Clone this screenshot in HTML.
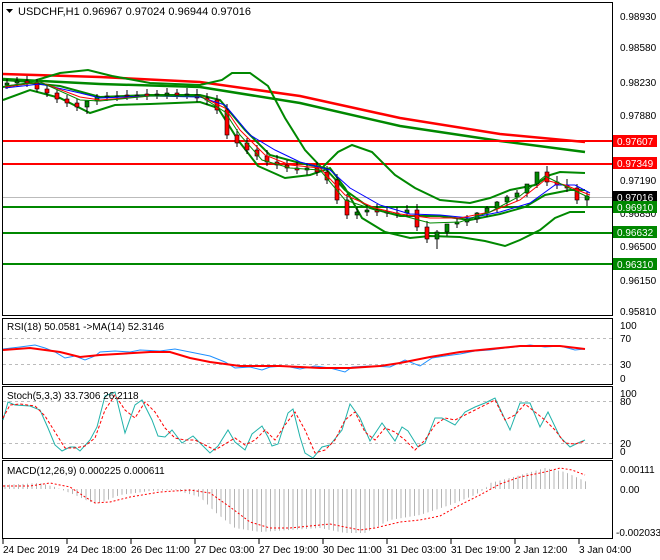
<!DOCTYPE html>
<html><head><meta charset="utf-8"><style>
html,body{margin:0;padding:0;background:#fff;width:660px;height:560px;overflow:hidden}
svg{display:block;font-family:"Liberation Sans",sans-serif}
</style></head><body>
<svg width="660" height="560" viewBox="0 0 660 560" xmlns="http://www.w3.org/2000/svg">
<defs>
<pattern id="vl" width="4.5" height="10" patternUnits="userSpaceOnUse"><rect x="0" y="0" width="1" height="10" fill="#b4b4b4"/></pattern>
</defs>
<rect width="660" height="560" fill="#fff"/>
<g fill="none" stroke="#000" stroke-width="1">
<rect x="2.5" y="2.5" width="610" height="313"/>
<rect x="2.5" y="318.5" width="610" height="66"/>
<rect x="2.5" y="386.5" width="610" height="72"/>
<rect x="2.5" y="460.5" width="610" height="78"/>
</g>
<g stroke="#bbb" stroke-dasharray="3,3">
<line x1="3" y1="338.5" x2="612" y2="338.5"/><line x1="3" y1="364.5" x2="612" y2="364.5"/>
<line x1="3" y1="401.5" x2="612" y2="401.5"/><line x1="3" y1="443.5" x2="612" y2="443.5"/>
</g>
<polyline fill="none" stroke="#f00" stroke-width="2.5" points="3,74 100,77 200,82 300,96 400,118 500,134 585,142"/>
<polyline fill="none" stroke="#080" stroke-width="2.5" points="3,79 100,84 200,87 300,103 400,126 500,141 585,152"/>
<line x1="3" y1="197.5" x2="612" y2="197.5" stroke="#bbb"/>
<g stroke-width="2">
<line x1="3" y1="141" x2="612" y2="141" stroke="#f00"/>
<line x1="3" y1="164" x2="612" y2="164" stroke="#f00"/>
<line x1="3" y1="207" x2="612" y2="207" stroke="#080"/>
<line x1="3" y1="233" x2="612" y2="233" stroke="#080"/>
<line x1="3" y1="264" x2="612" y2="264" stroke="#080"/>
</g>
<g fill="none" stroke="#080" stroke-width="2">
<polyline points="3,80 30,82 60,73 88,70 112,76 150,83 200,85 222,80 232,73 250,73 268,86 285,118 305,150 322,168 338,152 352,145 372,152 395,175 415,188 440,200 470,203 490,198 510,190 535,185 550,175 560,172 585,173"/>
<polyline points="3,100 30,90 60,98 90,113 115,105 150,104 200,102 218,108 238,140 258,166 285,178 310,175 330,168 345,188 362,218 385,232 410,238 430,236 460,237 485,241 505,246 520,240 540,230 555,218 570,212 585,212"/>
<polyline points="3,87 30,83 60,86 100,97 150,95 200,95 220,100 245,130 270,155 300,163 325,168 345,190 370,208 400,216 440,216 470,220 500,214 525,207 545,195 570,190 585,190"/>
</g>
<!-- candles wicks -->
<path stroke="#000" fill="none" d="M7 79V89M17 77V87M27 76V87M37 79V92M47 85V97M57 89V103M67 95V107M77 99V111M87 101V114M97 94V105M107 92V101M117 91V101M127 90V100M137 91V100M147 89V100M157 90V99M167 88V99M177 89V99M187 88V99M197 89V102M207 93V105M217 95V114M227 104V139M237 129V147M247 138V154M257 145V160M267 150V166M277 155V169M287 160V172M297 162V174M307 163V175M317 162V176M327 166V184M337 174V204M347 194V219M357 207V219M367 205V216M377 204V216M387 206V217M397 207V218M407 205V217M417 204V231M427 221V243M437 230V249M447 225V236M457 218V228M467 215V226M477 212V223M487 206V217M497 201V212M507 195V206M517 190V201M527 184V197M537 176V188M547 166V186M557 176V189M567 179V192M577 184V204M587 192V206"/>
<g stroke="#000" stroke-width="0.6">
<rect x="5" y="83" width="4" height="2" fill="#080"/><rect x="15" y="81" width="4" height="2" fill="#080"/><rect x="25" y="81" width="4" height="2" fill="#f00"/><rect x="35" y="83" width="4" height="6" fill="#f00"/><rect x="45" y="89" width="4" height="4" fill="#f00"/><rect x="55" y="93" width="4" height="6" fill="#f00"/><rect x="65" y="99" width="4" height="4" fill="#f00"/><rect x="75" y="103" width="4" height="4" fill="#f00"/><rect x="85" y="101" width="4" height="6" fill="#080"/><rect x="95" y="97" width="4" height="4" fill="#080"/><rect x="105" y="96" width="4" height="1" fill="#080"/><rect x="115" y="96" width="4" height="1" fill="#080"/><rect x="125" y="95" width="4" height="1" fill="#f00"/><rect x="135" y="95" width="4" height="1" fill="#080"/><rect x="145" y="94" width="4" height="2" fill="#f00"/><rect x="155" y="94" width="4" height="1" fill="#080"/><rect x="165" y="93" width="4" height="2" fill="#080"/><rect x="175" y="93" width="4" height="2" fill="#f00"/><rect x="185" y="94" width="4" height="1" fill="#080"/><rect x="195" y="95" width="4" height="3" fill="#f00"/><rect x="205" y="98" width="4" height="2" fill="#f00"/><rect x="215" y="100" width="4" height="10" fill="#f00"/><rect x="225" y="110" width="4" height="25" fill="#f00"/><rect x="235" y="135" width="4" height="8" fill="#f00"/><rect x="245" y="143" width="4" height="7" fill="#f00"/><rect x="255" y="150" width="4" height="6" fill="#f00"/><rect x="265" y="156" width="4" height="6" fill="#f00"/><rect x="275" y="162" width="4" height="3" fill="#f00"/><rect x="285" y="165" width="4" height="3" fill="#f00"/><rect x="295" y="168" width="4" height="2" fill="#f00"/><rect x="305" y="168" width="4" height="2" fill="#080"/><rect x="315" y="168" width="4" height="4" fill="#f00"/><rect x="325" y="172" width="4" height="8" fill="#f00"/><rect x="335" y="180" width="4" height="20" fill="#f00"/><rect x="345" y="200" width="4" height="15" fill="#f00"/><rect x="355" y="212" width="4" height="3" fill="#080"/><rect x="365" y="210" width="4" height="2" fill="#080"/><rect x="375" y="210" width="4" height="2" fill="#f00"/><rect x="385" y="212" width="4" height="1" fill="#f00"/><rect x="395" y="213" width="4" height="1" fill="#f00"/><rect x="405" y="210" width="4" height="3" fill="#080"/><rect x="415" y="210" width="4" height="17" fill="#f00"/><rect x="425" y="227" width="4" height="12" fill="#f00"/><rect x="435" y="232" width="4" height="7" fill="#080"/><rect x="445" y="224" width="4" height="8" fill="#080"/><rect x="455" y="222" width="4" height="2" fill="#080"/><rect x="465" y="219" width="4" height="3" fill="#080"/><rect x="475" y="213" width="4" height="6" fill="#080"/><rect x="485" y="208" width="4" height="5" fill="#080"/><rect x="495" y="202" width="4" height="6" fill="#080"/><rect x="505" y="197" width="4" height="5" fill="#080"/><rect x="515" y="193" width="4" height="4" fill="#080"/><rect x="525" y="184" width="4" height="9" fill="#080"/><rect x="535" y="172" width="4" height="12" fill="#080"/><rect x="545" y="172" width="4" height="10" fill="#f00"/><rect x="555" y="182" width="4" height="3" fill="#f00"/><rect x="565" y="185" width="4" height="3" fill="#f00"/><rect x="575" y="188" width="4" height="12" fill="#f00"/><rect x="585" y="196" width="4" height="4" fill="#080"/>
</g>
<polyline fill="none" stroke="#00f" stroke-width="1" points="5,88 40,84 80,93 100,98 150,96 200,97 225,105 250,135 275,150 300,162 330,170 350,188 380,205 410,214 440,215 470,218 500,212 530,203 555,185 575,185 590,193"/>
<polyline fill="none" stroke="#f00" stroke-width="1" points="5,87 40,82 80,97 100,100 150,96 200,96 225,108 240,130 265,155 290,165 320,168 345,195 375,208 400,214 430,218 460,218 490,212 520,200 545,180 565,185 590,195"/>
<polyline fill="none" stroke="#080" stroke-width="1" points="5,86 40,82 80,100 100,101 150,96 200,96 225,112 240,135 262,160 290,168 320,170 345,200 375,210 400,215 430,223 460,222 490,212 520,196 545,176 565,186 590,198"/>
<path d="M6,9 L13,9 L9.5,13 Z" fill="#000"/>
<text x="18" y="15" font-size="11" fill="#000">USDCHF,H1  0.96967 0.97024 0.96944 0.97016</text>
<g font-size="10" fill="#000">
<text x="620" y="20">0.98930</text><text x="620" y="51">0.98580</text><text x="620" y="86">0.98230</text>
<text x="620" y="119">0.97880</text><text x="620" y="184">0.97190</text><text x="620" y="217">0.96850</text>
<text x="620" y="250">0.96500</text><text x="620" y="284">0.96150</text><text x="620" y="315">0.95810</text>
</g>
<g font-size="10">
<rect x="613" y="135" width="44" height="12" fill="#f00"/><text x="617" y="145" fill="#fff">0.97607</text>
<rect x="613" y="157" width="44" height="12" fill="#f00"/><text x="617" y="167" fill="#fff">0.97349</text>
<rect x="613" y="191" width="44" height="12" fill="#000"/><text x="617" y="201" fill="#fff">0.97016</text>
<rect x="613" y="201" width="44" height="12" fill="#080"/><text x="617" y="211" fill="#fff">0.96910</text>
<rect x="613" y="226" width="44" height="12" fill="#080"/><text x="617" y="236" fill="#fff">0.96632</text>
<rect x="613" y="258" width="44" height="12" fill="#080"/><text x="617" y="268" fill="#fff">0.96310</text>
</g>
<polyline fill="none" stroke="#1e90ff" stroke-width="1" points="3,349 20,347 35,345 45,348 55,352 65,358 75,356 85,360 95,356 100,352 115,351 130,352 140,350 160,351 175,349 185,351 195,353 210,356 225,362 235,368 250,367 262,370 270,367 285,366 300,369 315,366 330,368 345,372 352,367 370,366 390,367 405,360 420,366 432,358 445,356 460,354 475,351 490,350 505,348 515,347 530,345 545,347 560,346 575,350 585,349"/>
<polyline fill="none" stroke="#f00" stroke-width="2" points="3,350 30,348 60,352 80,357 100,355 150,352 170,352 190,358 210,362 240,366 280,366 320,368 350,368 380,366 400,363 430,357 460,352 490,349 520,346 560,346 585,349"/>
<text x="7" y="330" font-size="10">RSI(18) 50.0581  -&gt;MA(14) 52.3146</text>
<g font-size="10"><text x="620" y="329">100</text><text x="620" y="342">70</text><text x="620" y="368">30</text><text x="620" y="382">0</text></g>
<polyline fill="none" stroke="#20b2aa" stroke-width="1" points="3,420 8,402 15,405 30,406 40,410 48,428 55,445 62,451 70,447 75,447 80,451 90,440 97,427 105,396 115,392 125,433 135,405 142,400 152,420 158,436 165,437 172,430 182,443 193,436 200,443 210,453 218,446 228,430 235,442 245,450 252,434 262,426 268,437 272,446 278,444 288,413 293,409 300,437 305,453 313,458 322,447 330,445 342,430 350,404 360,418 370,441 382,423 395,441 402,427 408,431 418,447 425,443 435,418 442,418 455,425 465,412 475,407 485,403 495,398 510,430 520,403 530,403 540,427 548,412 560,437 570,447 578,443 585,440"/>
<polyline fill="none" stroke="#f00" stroke-width="1" stroke-dasharray="3,2" points="3,418 10,405 20,404 35,406 45,416 55,432 65,448 75,448 85,446 95,438 105,410 115,395 125,410 135,418 145,402 155,412 165,428 175,438 185,440 195,440 205,445 215,450 225,444 235,438 245,445 255,440 265,430 275,440 285,425 295,412 305,430 315,453 325,450 335,440 345,420 355,412 365,432 375,440 385,428 395,432 405,440 415,450 425,440 435,425 445,418 455,420 465,415 475,410 485,405 495,400 505,420 515,415 525,404 535,412 545,420 555,430 565,443 575,444 585,441"/>
<text x="7" y="399" font-size="10">Stoch(5,3,3) 33.7306 26.2118</text>
<g font-size="10"><text x="620" y="397">100</text><text x="620" y="405">80</text><text x="620" y="447">20</text><text x="620" y="455">0</text></g>
<polygon fill="url(#vl)" points="3,489 3,485 40,483 55,487 75,495 90,502 100,503 120,495 150,491 175,490 200,497 215,512 235,528 260,532 290,530 320,528 345,533 365,533 390,520 420,515 450,505 475,495 485,489 490,483 510,478 545,468 565,472 587,482 587,489"/>
<polyline fill="none" stroke="#f00" stroke-width="1" stroke-dasharray="2,2" points="3,486 30,486 50,483 70,487 85,497 95,503 110,502 130,497 160,492 190,490 210,493 230,507 250,522 270,528 290,528 310,526 330,524 345,527 360,530 375,528 400,522 420,520 440,516 460,505 480,495 500,484 520,477 545,472 560,468 572,470 585,475"/>
<text x="7" y="474" font-size="10">MACD(12,26,9) 0.000225 0.000611</text>
<g font-size="10"><text x="620" y="473">0.00111</text><text x="620" y="493">0.00</text><text x="616" y="536">-0.002033</text></g>
<g stroke="#000"><line x1="3" y1="539" x2="3" y2="544"/><line x1="67" y1="539" x2="67" y2="544"/><line x1="131" y1="539" x2="131" y2="544"/><line x1="195" y1="539" x2="195" y2="544"/><line x1="259" y1="539" x2="259" y2="544"/><line x1="323" y1="539" x2="323" y2="544"/><line x1="387" y1="539" x2="387" y2="544"/><line x1="451" y1="539" x2="451" y2="544"/><line x1="515" y1="539" x2="515" y2="544"/><line x1="579" y1="539" x2="579" y2="544"/></g>
<g font-size="10"><text x="3" y="553">24 Dec 2019</text><text x="67" y="553">24 Dec 18:00</text><text x="131" y="553">26 Dec 11:00</text><text x="195" y="553">27 Dec 03:00</text><text x="259" y="553">27 Dec 19:00</text><text x="323" y="553">30 Dec 11:00</text><text x="387" y="553">31 Dec 03:00</text><text x="451" y="553">31 Dec 19:00</text><text x="515" y="553">2 Jan 12:00</text><text x="579" y="553">3 Jan 04:00</text></g>
</svg>
</body></html>
